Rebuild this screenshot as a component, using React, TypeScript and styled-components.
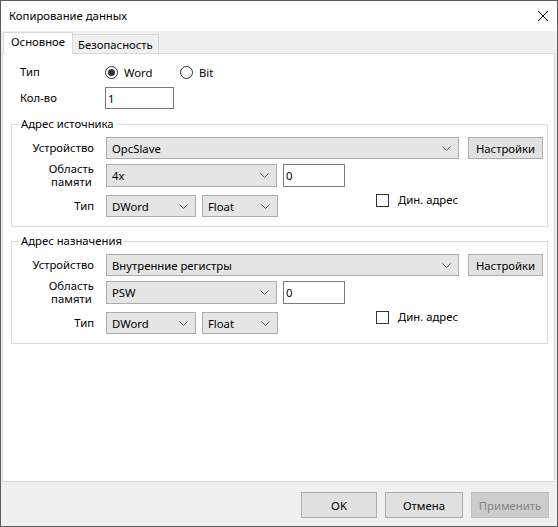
import React from 'react';
import styled, { createGlobalStyle } from 'styled-components';

const GlobalStyle = createGlobalStyle`
  html, body {
    margin: 0;
    padding: 0;
    background: #ffffff;
  }
  body {
    font-family: 'Noto Sans', 'Open Sans', sans-serif;
    font-size: 11.3px;
    color: #000;
  }
  * {
    box-sizing: border-box;
  }
`;

const Window = styled.div`
  width: 558px;
  height: 527px;
  border: 1px solid #5b5b5b;
  background: #f0f0f0;
  display: flex;
  flex-direction: column;
`;

const TitleBar = styled.div`
  height: 30px;
  flex: none;
  background: #ffffff;
  display: flex;
  align-items: center;
  justify-content: space-between;
  padding: 0 9px 0 8px;
`;

const Title = styled.span`
  line-height: 16px;
`;

const CloseBtn = styled.button`
  width: 10px;
  height: 10px;
  padding: 0;
  border: 0;
  background: none;
  display: flex;
`;

const TabStrip = styled.div`
  height: 22px;
  flex: none;
  display: flex;
  align-items: flex-end;
  padding-left: 2px;
`;

const Tab = styled.div<{ $active?: boolean }>`
  position: relative;
  z-index: ${(p) => (p.$active ? 1 : 0)};
  height: ${(p) => (p.$active ? '22px' : '19px')};
  margin-bottom: ${(p) => (p.$active ? '-1px' : '0')};
  margin-left: ${(p) => (p.$active ? '0' : '-1px')};
  padding: ${(p) => (p.$active ? '1px 7px 0 7px' : '2px 5px 0 5px')};
  background: ${(p) => (p.$active ? '#ffffff' : '#f0f0f0')};
  border: 1px solid #d9d9d9;
  border-bottom: none;
  line-height: 16px;
  white-space: nowrap;
`;

const Panel = styled.div`
  height: 429px;
  flex: none;
  margin: 0 2px 0 1px;
  background: #ffffff;
  border: 1px solid #d9d9d9;
  display: flex;
  flex-direction: column;
`;

const TopGrid = styled.div`
  display: grid;
  grid-template-columns: 85px auto;
  grid-template-rows: 20px 22px;
  row-gap: 5px;
  align-items: center;
  justify-content: start;
  padding: 8px 0 0 17px;
`;

const Label = styled.span`
  line-height: 16px;
  white-space: nowrap;
`;

const RadioRow = styled.div`
  display: flex;
  align-items: center;
`;

const RadioItem = styled.label`
  display: flex;
  align-items: center;
  gap: 6px;
  width: 75px;
`;

const RadioDot = styled.span<{ $checked?: boolean }>`
  width: 13px;
  height: 13px;
  border-radius: 50%;
  border: 1px solid #333333;
  background: #ffffff;
  display: flex;
  align-items: center;
  justify-content: center;
  &::after {
    content: '';
    display: ${(p) => (p.$checked ? 'block' : 'none')};
    width: 7px;
    height: 7px;
    border-radius: 50%;
    background: #333333;
  }
`;

const TextInput = styled.input<{ $w: number; $h?: number; $ml?: number }>`
  width: ${(p) => p.$w}px;
  height: ${(p) => p.$h ?? 22}px;
  margin-left: ${(p) => p.$ml ?? 0}px;
  border: 1px solid #7a7a7a;
  background: #ffffff;
  padding: 0 2px;
  font: inherit;
  color: #000;
  outline: none;
`;

const Group = styled.fieldset<{ $top: number }>`
  margin: ${(p) => p.$top}px 6px 0 8px;
  padding: 0;
  min-width: 0;
  border: 1px solid #dcdcdc;
`;

const Legend = styled.legend`
  margin-left: 7px;
  padding: 0 2px;
  line-height: 16px;
`;

const GroupGrid = styled.div`
  display: grid;
  grid-template-columns: 82px 1fr;
  grid-template-rows: 22px 23px 25px;
  column-gap: 12px;
  row-gap: 5px;
  align-items: center;
  padding: 5px 4px 9px 0;
`;

const GroupLabel = styled.div<{ $end?: boolean }>`
  text-align: right;
  line-height: ${(p) => (p.$end ? '22px' : '16px')};
  align-self: ${(p) => (p.$end ? 'end' : 'center')};
  white-space: nowrap;
`;

const TwoLine = styled.span`
  display: inline-block;
  text-align: center;
  line-height: 13px;
  margin-top: 1px;
`;

const Line = styled.div<{ $end?: boolean }>`
  display: flex;
  align-items: ${(p) => (p.$end ? 'flex-end' : 'center')};
  height: 100%;
`;

const Combo = styled.div<{ $w?: number; $ml?: number }>`
  ${(p) => (p.$w ? `width: ${p.$w}px; flex: none;` : 'flex: 1;')}
  height: 22px;
  margin-left: ${(p) => p.$ml ?? 0}px;
  background: #e5e5e5;
  border: 1px solid #acacac;
  display: flex;
  align-items: center;
  justify-content: space-between;
  padding: 0 7px 0 5px;
`;

const ComboFull = styled(Combo)`
  height: 23px;
`;

const Button = styled.button<{ $w: number; $h?: number; $ml?: number; $disabled?: boolean }>`
  width: ${(p) => p.$w}px;
  height: ${(p) => p.$h ?? 23}px;
  margin-left: ${(p) => p.$ml ?? 0}px;
  flex: none;
  font: inherit;
  color: ${(p) => (p.$disabled ? '#838383' : '#000')};
  background: ${(p) => (p.$disabled ? '#cccccc' : '#e1e1e1')};
  border: 1px solid ${(p) => (p.$disabled ? '#bfbfbf' : '#adadad')};
  padding: 0;
`;

const CheckWrap = styled.label<{ $ml: number }>`
  display: flex;
  align-items: center;
  gap: 9px;
  margin-left: ${(p) => p.$ml}px;
  align-self: flex-start;
  line-height: 16px;
`;

const CheckBox = styled.span`
  width: 13px;
  height: 13px;
  border: 1px solid #333333;
  background: #ffffff;
`;

const Footer = styled.div`
  flex: 1;
  display: flex;
  justify-content: flex-end;
  align-items: flex-start;
  gap: 8px;
  padding: 10px 8px 0 0;
`;

const Chevron = () => (
  <svg width="9" height="5" viewBox="0 0 9 5">
    <polyline points="0.5,0.5 4.5,4.5 8.5,0.5" fill="none" stroke="#5a5a5a" strokeWidth="1" />
  </svg>
);

const Select: React.FC<{ value: string; w?: number; ml?: number; tall?: boolean }> = ({
  value,
  w,
  ml,
  tall,
}) => {
  const Box = tall ? ComboFull : Combo;
  return (
    <Box $w={w} $ml={ml}>
      <span>{value}</span>
      <Chevron />
    </Box>
  );
};

const AddressGroup: React.FC<{ title: string; device: string; area: string; top: number }> = ({
  title,
  device,
  area,
  top,
}) => (
  <Group $top={top}>
    <Legend>{title}</Legend>
    <GroupGrid>
      <GroupLabel>Устройство</GroupLabel>
      <Line>
        <Select value={device} />
        <Button $w={75} $h={22} $ml={9}>
          Настройки
        </Button>
      </Line>
      <GroupLabel>
        <TwoLine>
          Область
          <br />
          памяти
        </TwoLine>
      </GroupLabel>
      <Line>
        <Select value={area} w={171} tall />
        <TextInput $w={62} $h={23} $ml={6} readOnly value="0" />
      </Line>
      <GroupLabel $end>Тип</GroupLabel>
      <Line $end>
        <Select value="DWord" w={90} />
        <Select value="Float" w={76} ml={6} />
        <CheckWrap $ml={98}>
          <CheckBox />
          <span>Дин. адрес</span>
        </CheckWrap>
      </Line>
    </GroupGrid>
  </Group>
);

export default function App() {
  return (
    <>
      <GlobalStyle />
      <Window>
        <TitleBar>
          <Title>Копирование данных</Title>
          <CloseBtn aria-label="close">
            <svg width="10" height="10" viewBox="0 0 10 10">
              <path d="M0 0 L10 10 M10 0 L0 10" stroke="#000" strokeWidth="1" />
            </svg>
          </CloseBtn>
        </TitleBar>
        <TabStrip>
          <Tab $active>Основное</Tab>
          <Tab>Безопасность</Tab>
        </TabStrip>
        <Panel>
          <TopGrid>
            <Label>Тип</Label>
            <RadioRow>
              <RadioItem>
                <RadioDot $checked />
                <span>Word</span>
              </RadioItem>
              <RadioItem>
                <RadioDot />
                <span>Bit</span>
              </RadioItem>
            </RadioRow>
            <Label>Кол-во</Label>
            <TextInput $w={69} readOnly value="1" />
          </TopGrid>
          <AddressGroup title="Адрес источника" device="OpcSlave" area="4x" top={7} />
          <AddressGroup title="Адрес назначения" device="Внутренние регистры" area="PSW" top={6} />
        </Panel>
        <Footer>
          <Button $w={76} $h={26}>OK</Button>
          <Button $w={78} $h={26}>Отмена</Button>
          <Button $w={78} $h={26} $disabled>
            Применить
          </Button>
        </Footer>
      </Window>
    </>
  );
}
